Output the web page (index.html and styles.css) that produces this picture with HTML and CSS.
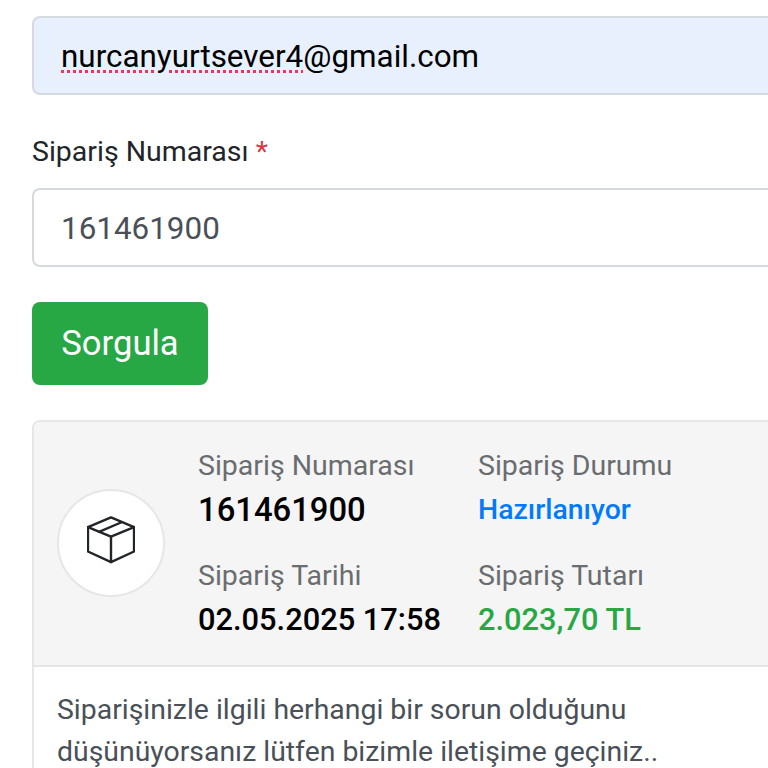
FILE: index.html
```html
<!DOCTYPE html>
<html lang="tr">
<head>
<meta charset="utf-8">
<title>Sipariş Sorgula</title>
<link rel="stylesheet" href="styles.css">
</head>
<body>
<main class="page">
  <div class="field field-filled"><span class="misspelled">nurcanyurtsever4</span>@gmail.com</div>
  <label class="label">Sipariş Numarası <span class="req">*</span></label>
  <div class="field">161461900</div>
  <button class="btn" type="button">Sorgula</button>
  <section class="card">
    <div class="card-head">
      <div class="icon-circle">
        <svg class="box" viewBox="0 0 50 50" width="48" height="48" fill="none" stroke="#212529" stroke-width="2.5" stroke-linejoin="round" stroke-linecap="round">
          <path d="M25 1.5 L49 11.5 V37 L25 48 L1 37 V11.5 Z"/>
          <path d="M1 11.5 L25 21.5 L49 11.5"/>
          <path d="M25 21.5 V48"/>
          <path d="M12.5 16.5 L36 6.5"/>
        </svg>
      </div>
      <dl class="info">
        <div class="item"><dt>Sipariş Numarası</dt><dd class="num">161461900</dd></div>
        <div class="item"><dt>Sipariş Durumu</dt><dd class="blue">Hazırlanıyor</dd></div>
        <div class="item"><dt>Sipariş Tarihi</dt><dd>02.05.2025 17:58</dd></div>
        <div class="item"><dt>Sipariş Tutarı</dt><dd class="green">2.023,70 TL</dd></div>
      </dl>
    </div>
    <p class="card-body">Siparişinizle ilgili herhangi bir sorun olduğunu düşünüyorsanız lütfen bizimle iletişime geçiniz..</p>
  </section>
</main>
</body>
</html>
```
FILE: styles.css
```css
html, body {
  margin: 0;
  height: 768px;
  overflow: hidden;
  background: #fff;
}
.page {
  box-sizing: border-box;
  width: 800px;
  padding: 16px 0 0 32px;
  font-family: Roboto, "Liberation Sans", sans-serif;
  color: #212529;
}
.field {
  box-sizing: border-box;
  height: 79px;
  line-height: 78px;
  padding: 0 27px;
  border: 2px solid #d5dade;
  border-radius: 8px;
  font-size: 31.4px;
  color: #495057;
  background: #fff;
}
.field-filled {
  background: #e8f0fe;
  color: #000;
  margin-bottom: 39px;
  line-height: 77px;
}
.misspelled {
  text-decoration: underline dotted #e8385a 2.5px;
  text-underline-offset: 3px;
}
.label {
  display: block;
  font-size: 28.5px;
  line-height: 36px;
  margin-bottom: 18px;
}
.req { color: #dc3545; }
.btn {
  display: block;
  box-sizing: border-box;
  width: 176px;
  height: 83px;
  margin: 35px 0 35px;
  padding: 0 0 2px;
  border: 0;
  border-radius: 8px;
  background: #28a745;
  color: #fff;
  font: 400 34.6px Roboto, sans-serif;
}
.card {
  border: 2px solid #e6e6e6;
  border-radius: 8px;
  background: #fff;
  height: 500px;
}
.card-head {
  display: flex;
  align-items: center;
  box-sizing: border-box;
  height: 245px;
  padding-left: 23px;
  background: #f5f5f5;
  border-bottom: 2px solid #e6e6e6;
  border-radius: 6px 6px 0 0;
}
.icon-circle {
  flex: none;
  box-sizing: border-box;
  display: flex;
  align-items: center;
  justify-content: center;
  width: 108px;
  height: 108px;
  border: 2px solid #e6e6e6;
  border-radius: 50%;
  background: #fff;
  margin-right: 33px;
  margin-bottom: 2px;
}
.box { margin-bottom: 5px; }
.info {
  display: grid;
  grid-template-columns: 280px 280px;
  row-gap: 22px;
  margin: 0;
  padding-bottom: 2px;
}
.item { display: block; }
dt {
  font-size: 28.5px;
  line-height: 44px;
  color: #6a6d70;
}
dd {
  margin: 0;
  font-size: 30.8px;
  line-height: 44px;
  font-weight: 500;
  color: #000;
}
dd.num { font-size: 32.8px; }
dd.blue { color: #007bff; font-size: 28.4px; }
dd.green { color: #28a745; }
.card-body {
  margin: 0;
  padding: 22px 23px;
  width: 660px;
  font-size: 28.4px;
  line-height: 42px;
  color: #495057;
}
```
